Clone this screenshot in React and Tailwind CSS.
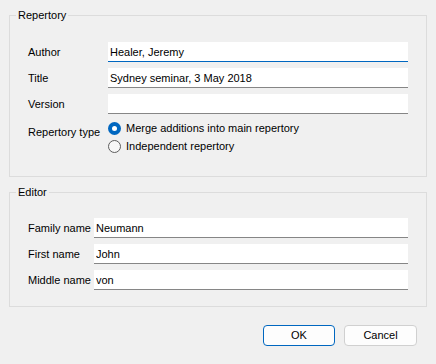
import React from 'react';

const font = { fontFamily: '"Liberation Sans", Arial, sans-serif' };

function Field({ label, value, focused }) {
  return (
    <>
      <label className="whitespace-nowrap leading-[20px] text-[#000]">{label}</label>
      <input
        readOnly
        value={value}
        className={
          'h-[20px] w-full bg-white px-[2px] text-[11px] text-black outline-none border-b ' +
          (focused ? 'border-[#0067c0]' : 'border-[#868686]')
        }
      />
    </>
  );
}

function Radio({ checked, children }) {
  return (
    <div className="flex h-[18px] items-center gap-[5px] whitespace-nowrap">
      {checked ? (
        <span className="flex h-[13px] w-[13px] items-center justify-center rounded-full bg-[#0067c0]">
          <span className="h-[5px] w-[5px] rounded-full bg-white" />
        </span>
      ) : (
        <span className="h-[13px] w-[13px] rounded-full border border-[#5d5d5d] bg-[#f7f7f7]" />
      )}
      <span>{children}</span>
    </div>
  );
}

export default function App() {
  return (
    <div
      className="flex h-[364px] w-[436px] flex-col bg-[#f0f0f0] px-[9px] pt-[7px] text-[11px] text-black"
      style={font}
    >
      {/* Repertory */}
      <fieldset className="border border-[#dcdcdc] pl-[6px]">
        <legend className="px-[2px] leading-[16px]">Repertory</legend>
        <div className="grid grid-cols-[80px_1fr] gap-y-[6px] pl-[12px] pr-[18px] pt-[19px] pb-[21px]">
          <Field label="Author" value="Healer, Jeremy" focused />
          <Field label="Title" value="Sydney seminar, 3 May 2018" />
          <Field label="Version" value="" />
          <label className="whitespace-nowrap pt-[4px] leading-[16px]">Repertory type</label>
          <div className="-mt-[1px] flex flex-col">
            <Radio checked>Merge additions into main repertory</Radio>
            <Radio>Independent repertory</Radio>
          </div>
        </div>
      </fieldset>

      {/* Editor */}
      <fieldset className="mt-[7px] border border-[#dcdcdc] pl-[6px]">
        <legend className="px-[2px] leading-[16px]">Editor</legend>
        <div className="grid grid-cols-[66px_1fr] gap-y-[6px] pl-[12px] pr-[18px] pt-[18px] pb-[16px]">
          <Field label="Family name" value="Neumann" />
          <Field label="First name" value="John" />
          <Field label="Middle name" value="von" />
        </div>
      </fieldset>

      <div className="mt-[18px] flex justify-end gap-[9px] pr-[10px]">
        <button className="h-[21px] w-[72px] rounded-[4px] border border-[#0067c0] bg-[#fdfdfd] leading-[19px]">
          OK
        </button>
        <button className="h-[21px] w-[73px] rounded-[4px] border border-[#d0d0d0] bg-[#fdfdfd] leading-[19px]">
          Cancel
        </button>
      </div>
    </div>
  );
}
